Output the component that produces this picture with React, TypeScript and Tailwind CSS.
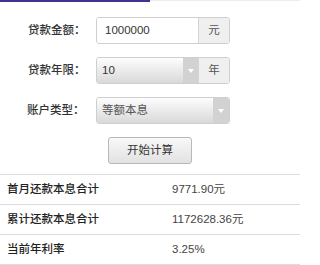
import React from "react";

const font = { fontFamily: '"Liberation Sans", "Noto Sans CJK SC", sans-serif' };

function Arrow() {
  return (
    <svg width="6" height="4" viewBox="0 0 6 4">
      <path d="M0 0 L6 0 L3 4 Z" fill="#ffffff" />
    </svg>
  );
}

export default function App() {
  return (
    <div className="w-[300px] h-[265px] bg-white overflow-hidden text-[#333]" style={font}>
      <div className="flex h-[2px]">
        <div className="w-[150px] bg-[#3f3590]" />
        <div className="flex-1 bg-[#ececec] h-[1px]" />
      </div>
      <div className="flex flex-col gap-[13px] pt-[15px]">
        <div className="flex items-center h-[27px]">
          <div className="w-[96px] pl-[28px] text-[11.5px] font-medium text-[#333]">贷款金额：</div>
          <div className="flex w-[134px] h-[27px] border border-[#cfcfcf] rounded-[3px] overflow-hidden">
            <div className="flex-1 bg-white flex items-center pl-[8px] text-[11.5px] text-[#333]">1000000</div>
            <div className="w-[31px] bg-[#efefef] border-l border-[#d5d5d5] flex items-center justify-center text-[11.5px] text-[#555]">元</div>
          </div>
        </div>
        <div className="flex items-center h-[27px]">
          <div className="w-[96px] pl-[28px] text-[11.5px] font-medium text-[#333]">贷款年限：</div>
          <div className="flex w-[134px] h-[27px] border border-[#cfcfcf] rounded-[3px] overflow-hidden">
            <div className="flex-1 bg-gradient-to-b from-[#fdfdfd] to-[#d9d9d9] flex items-center pl-[5px] text-[11.5px] text-[#333]">10</div>
            <div className="w-[15px] bg-[#d2d2d2] flex items-center justify-center"><Arrow /></div>
            <div className="w-[31px] bg-[#efefef] border-l border-[#d5d5d5] flex items-center justify-center text-[11.5px] text-[#555]">年</div>
          </div>
        </div>
        <div className="flex items-center h-[27px]">
          <div className="w-[96px] pl-[27px] text-[11.5px] font-medium text-[#333]">账户类型：</div>
          <div className="flex w-[134px] h-[27px] border border-[#cfcfcf] rounded-[3px] overflow-hidden">
            <div className="flex-1 bg-gradient-to-b from-[#fdfdfd] to-[#d9d9d9] flex items-center pl-[5px] text-[11.5px] text-[#555]">等额本息</div>
            <div className="w-[16px] bg-[#d2d2d2] flex items-center justify-center"><Arrow /></div>
          </div>
        </div>
      </div>
      <div className="flex justify-center pt-[13px]">
        <div className="w-[84px] h-[27px] border border-[#b8b8b8] rounded-[3px] bg-gradient-to-b from-[#f8f8f8] to-[#e2e2e2] flex items-center justify-center text-[11.5px] text-[#333]">开始计算</div>
      </div>
      <div className="mt-[10px] border-t border-[#dcdcdc]">
        {[
          ["首月还款本息合计", "9771.90元"],
          ["累计还款本息合计", "1172628.36元"],
          ["当前年利率", "3.25%"],
        ].map(([k, v]) => (
          <div key={k} className="flex items-center h-[30px] border-b border-[#dcdcdc]">
            <div className="w-[172px] pl-[7px] text-[11.5px] font-medium text-[#222]">{k}</div>
            <div className="text-[11.5px] text-[#444]">{v}</div>
          </div>
        ))}
      </div>
    </div>
  );
}
